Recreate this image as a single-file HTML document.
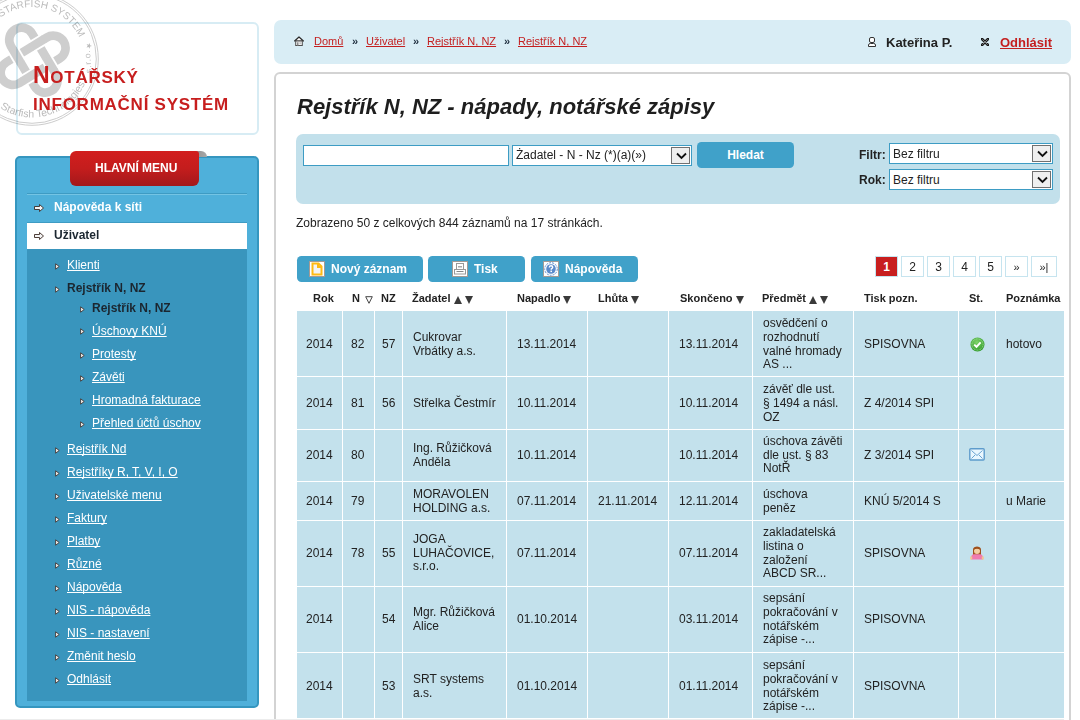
<!DOCTYPE html>
<html><head><meta charset="utf-8">
<style>
*{box-sizing:border-box}
html,body{margin:0;padding:0}
a,div,span{text-decoration-skip-ink:none}
body{width:1080px;height:720px;overflow:hidden;position:relative;background:#fff;font-family:"Liberation Sans",sans-serif;color:#222;font-size:12px}
.abs{position:absolute}
#logo{left:16px;top:22px;width:243px;height:113px;border:2px solid #d7ecf4;border-radius:6px}
.logot{color:#c71e1e;font-weight:bold;letter-spacing:0.72px;font-size:17px;line-height:20px;white-space:nowrap}
#menu{left:15px;top:156px;width:244px;height:552px;background:#4fb0da;border-radius:5px;border:2px solid #3596bf}
#tab{left:70px;top:151px;width:129px;height:35px;border-radius:6px 3px 6px 6px;background:linear-gradient(#d21e1e,#c41d1d 50%,#a3181b);color:#fff;font-weight:bold;font-size:12px;padding:10px 0 0 25px;line-height:14px}
#fold{left:193px;top:151px;width:14px;height:6px;background:linear-gradient(90deg,#8e8e8e,#a8a8a8);border-radius:0 7px 0 0}
#sep{left:27px;top:193px;width:220px;height:2px;background:linear-gradient(#3e9bc3 50%,#74c4e4 50%)}
#uziv{left:27px;top:222px;width:220px;height:27px;background:#fff;border-top:1px solid #3e9bc3}
#dark{left:27px;top:249px;width:220px;height:452px;background:#3995bd}
.mi{position:absolute;white-space:nowrap;font-size:12px;line-height:14px}
.mi a{color:#fff;text-decoration:underline}
.mi b{color:#1b2630}
.bul{position:absolute}
#bc{left:274px;top:20px;width:797px;height:44px;background:#d9edf5;border-radius:7px}
.bct{position:absolute;font-size:11px;line-height:13px;white-space:nowrap;color:#c41f1f;text-decoration:underline}
.rq{position:absolute;font-size:11px;line-height:13px;color:#1e2e3e;font-weight:bold}
#content{left:274px;top:72px;width:797px;height:700px;border:2px solid #d3d3d3;border-radius:6px}
#title{left:297px;top:94px;font-size:22px;font-weight:bold;font-style:italic;color:#1e1e1e;white-space:nowrap;line-height:26px}
#search{left:296px;top:134px;width:764px;height:70px;background:#c2e0eb;border-radius:7px}
.inp{position:absolute;background:#fff;border:1px solid #3d9cc4;font-size:12px;line-height:14px;white-space:nowrap}
.dd{position:absolute;width:19px;height:17px;background:#efefef;border:1px solid #707070}
.dd svg{position:absolute;left:4px;top:4px}
.btn{position:absolute;background:#40a1c9;border-radius:4.5px;color:#fff;font-weight:bold;font-size:12px;white-space:nowrap;line-height:14px}
.ico{position:absolute;width:16px;height:16px;background:#fff;border:1px solid #a39a94}
.ico svg{position:absolute;left:0;top:0}
.lbl{position:absolute;font-weight:bold;font-size:12px;line-height:14px;color:#222}
#info{left:296px;top:216px;white-space:nowrap;line-height:14px}
.pg{position:absolute;top:256px;height:21px;width:23px;border:1px solid #c6e4ef;text-align:center;line-height:19px;padding-top:1px;font-size:12px;color:#222}
table{position:absolute;left:296px;top:285px;border-collapse:separate;border-spacing:1px;table-layout:fixed;width:769px}
th{font-size:11px;font-weight:bold;text-align:left;height:24px;padding:0;white-space:nowrap;color:#222;vertical-align:middle;background:#fff}
td{background:#c3e1ec;padding:2px 0 0 10px;vertical-align:middle;line-height:13.8px;font-size:12px;color:#222;white-space:nowrap}
tr.up td{padding-top:0}
td.c0{padding-left:9px}td.c1{padding-left:8px}td.c2{padding-left:7px}
.arr{display:inline-block;vertical-align:-2px}
#bot{left:0;top:719px;width:1064px;height:1px;background:#ececec}
</style></head><body>

<div id="logo" class="abs"></div>
<!-- watermark -->
<svg class="abs" style="left:0;top:0;mix-blend-mode:multiply" width="110" height="135" viewBox="0 0 110 135">
 <defs>
  <path id="tp" d="M 0.71 17.47 A 52 52 0 0 1 83.21 49.97"/>
  <path id="bp" d="M 0.14 108.06 A 58.5 58.5 0 0 0 90.28 64.10"/>
 </defs>
 <g fill="none" stroke="#c6c6c6">
  <circle cx="32" cy="59" r="66.3" stroke-width="0.9"/>
  <circle cx="32" cy="59" r="64.3" stroke-width="0.9"/>
 </g>
 <g fill="#bcbcbc" font-family="Liberation Sans" font-size="9">
  <text font-size="10"><textPath href="#tp" textLength="93" lengthAdjust="spacing">STARFISH SYSTEM</textPath></text>
  <text font-size="10.5"><textPath href="#bp" textLength="100" lengthAdjust="spacing">Starfish Technologies</textPath></text>
  <text x="0" y="0" font-size="7.5" transform="translate(84.5,46.5) rotate(20)">★</text>
  <text x="0" y="0" font-size="8.5" letter-spacing="0.9" transform="translate(91.5,73) rotate(-94)">s.r.o.</text>
 </g>
 <g fill="none" stroke="#cecece" stroke-width="8.7">
  <rect x="-35.70" y="-12.30" width="71.40" height="24.60" rx="12.3" ry="12.3" transform="translate(33.4,60.1) rotate(59.5)"/>
  <rect x="-35.90" y="-12.30" width="71.80" height="24.60" rx="12.3" ry="12.3" transform="translate(33.1,60.3) rotate(-31.4)"/>
  <path d="M23.05 80.85 L35.25 73.40" stroke="#fff" stroke-width="12.299999999999999"/>
  <path d="M22.54 81.16 L35.77 73.08"/>
  <path d="M13.03 49.76 L20.29 62.08" stroke="#fff" stroke-width="12.299999999999999"/>
  <path d="M12.73 49.24 L20.60 62.60"/>
  <path d="M46.52 58.14 L53.78 70.46" stroke="#fff" stroke-width="12.299999999999999"/>
  <path d="M46.22 57.62 L54.08 70.98"/>
  <path d="M31.56 46.83 L43.77 39.38" stroke="#fff" stroke-width="12.299999999999999"/>
  <path d="M31.05 47.14 L44.28 39.07"/>
  </g>
</svg>

<div class="abs logot" style="left:33px;top:65px"><span style="font-size:23px">N</span>OTÁŘSKÝ</div>
<div class="abs logot" style="left:33px;top:95px;letter-spacing:0.75px">INFORMAČNÍ SYSTÉM</div>

<div id="menu" class="abs"></div>
<div id="sep" class="abs"></div>
<div id="uziv" class="abs"></div>
<div id="dark" class="abs"></div>
<div id="fold" class="abs"></div>
<div id="tab" class="abs">HLAVNÍ MENU</div>

<svg class="bul" style="left:34px;top:204px" width="10" height="8" viewBox="0 0 10 8"><path d="M0.5 2.5 H5.5 V0.5 L9.5 4 L5.5 7.5 V5.5 H0.5 Z" fill="#f4f4f4" stroke="#3b2a24" stroke-width="0.9"/></svg>
<div class="mi" style="left:54px;top:200px;font-weight:bold;color:#fff">Nápověda k síti</div>
<svg class="bul" style="left:34px;top:232px" width="10" height="8" viewBox="0 0 10 8"><path d="M0.5 2.5 H5.5 V0.5 L9.5 4 L5.5 7.5 V5.5 H0.5 Z" fill="#f4f4f4" stroke="#3b2a24" stroke-width="0.9"/></svg>
<div class="mi" style="left:54px;top:228px;font-weight:bold;color:#1b2630">Uživatel</div>
<svg class="bul" style="left:55px;top:263px" width="5" height="7" viewBox="0 0 5 7"><path d="M0.6 0.8 L4.2 3.5 L0.6 6.2 Z" fill="#f2efec" stroke="#3b2a24" stroke-width="0.8" stroke-linejoin="round"/></svg>
<div class="mi" style="left:67px;top:258px"><a>Klienti</a></div>
<svg class="bul" style="left:55px;top:286px" width="5" height="7" viewBox="0 0 5 7"><path d="M0.6 0.8 L4.2 3.5 L0.6 6.2 Z" fill="#f2efec" stroke="#3b2a24" stroke-width="0.8" stroke-linejoin="round"/></svg>
<div class="mi" style="left:67px;top:281px"><b>Rejstřík N, NZ</b></div>
<svg class="bul" style="left:80px;top:306px" width="5" height="7" viewBox="0 0 5 7"><path d="M0.6 0.8 L4.2 3.5 L0.6 6.2 Z" fill="#f2efec" stroke="#3b2a24" stroke-width="0.8" stroke-linejoin="round"/></svg>
<div class="mi" style="left:92px;top:301px"><b>Rejstřík N, NZ</b></div>
<svg class="bul" style="left:80px;top:328px" width="5" height="7" viewBox="0 0 5 7"><path d="M0.6 0.8 L4.2 3.5 L0.6 6.2 Z" fill="#f2efec" stroke="#3b2a24" stroke-width="0.8" stroke-linejoin="round"/></svg>
<div class="mi" style="left:92px;top:324px"><a>Úschovy KNÚ</a></div>
<svg class="bul" style="left:80px;top:352px" width="5" height="7" viewBox="0 0 5 7"><path d="M0.6 0.8 L4.2 3.5 L0.6 6.2 Z" fill="#f2efec" stroke="#3b2a24" stroke-width="0.8" stroke-linejoin="round"/></svg>
<div class="mi" style="left:92px;top:347px"><a>Protesty</a></div>
<svg class="bul" style="left:80px;top:375px" width="5" height="7" viewBox="0 0 5 7"><path d="M0.6 0.8 L4.2 3.5 L0.6 6.2 Z" fill="#f2efec" stroke="#3b2a24" stroke-width="0.8" stroke-linejoin="round"/></svg>
<div class="mi" style="left:92px;top:370px"><a>Závěti</a></div>
<svg class="bul" style="left:80px;top:398px" width="5" height="7" viewBox="0 0 5 7"><path d="M0.6 0.8 L4.2 3.5 L0.6 6.2 Z" fill="#f2efec" stroke="#3b2a24" stroke-width="0.8" stroke-linejoin="round"/></svg>
<div class="mi" style="left:92px;top:393px"><a>Hromadná fakturace</a></div>
<svg class="bul" style="left:80px;top:421px" width="5" height="7" viewBox="0 0 5 7"><path d="M0.6 0.8 L4.2 3.5 L0.6 6.2 Z" fill="#f2efec" stroke="#3b2a24" stroke-width="0.8" stroke-linejoin="round"/></svg>
<div class="mi" style="left:92px;top:416px"><a>Přehled účtů úschov</a></div>
<svg class="bul" style="left:55px;top:447px" width="5" height="7" viewBox="0 0 5 7"><path d="M0.6 0.8 L4.2 3.5 L0.6 6.2 Z" fill="#f2efec" stroke="#3b2a24" stroke-width="0.8" stroke-linejoin="round"/></svg>
<div class="mi" style="left:67px;top:442px"><a>Rejstřík Nd</a></div>
<svg class="bul" style="left:55px;top:470px" width="5" height="7" viewBox="0 0 5 7"><path d="M0.6 0.8 L4.2 3.5 L0.6 6.2 Z" fill="#f2efec" stroke="#3b2a24" stroke-width="0.8" stroke-linejoin="round"/></svg>
<div class="mi" style="left:67px;top:465px"><a>Rejstříky R, T, V, I, O</a></div>
<svg class="bul" style="left:55px;top:493px" width="5" height="7" viewBox="0 0 5 7"><path d="M0.6 0.8 L4.2 3.5 L0.6 6.2 Z" fill="#f2efec" stroke="#3b2a24" stroke-width="0.8" stroke-linejoin="round"/></svg>
<div class="mi" style="left:67px;top:488px"><a>Uživatelské menu</a></div>
<svg class="bul" style="left:55px;top:516px" width="5" height="7" viewBox="0 0 5 7"><path d="M0.6 0.8 L4.2 3.5 L0.6 6.2 Z" fill="#f2efec" stroke="#3b2a24" stroke-width="0.8" stroke-linejoin="round"/></svg>
<div class="mi" style="left:67px;top:511px"><a>Faktury</a></div>
<svg class="bul" style="left:55px;top:539px" width="5" height="7" viewBox="0 0 5 7"><path d="M0.6 0.8 L4.2 3.5 L0.6 6.2 Z" fill="#f2efec" stroke="#3b2a24" stroke-width="0.8" stroke-linejoin="round"/></svg>
<div class="mi" style="left:67px;top:534px"><a>Platby</a></div>
<svg class="bul" style="left:55px;top:562px" width="5" height="7" viewBox="0 0 5 7"><path d="M0.6 0.8 L4.2 3.5 L0.6 6.2 Z" fill="#f2efec" stroke="#3b2a24" stroke-width="0.8" stroke-linejoin="round"/></svg>
<div class="mi" style="left:67px;top:557px"><a>Různé</a></div>
<svg class="bul" style="left:55px;top:585px" width="5" height="7" viewBox="0 0 5 7"><path d="M0.6 0.8 L4.2 3.5 L0.6 6.2 Z" fill="#f2efec" stroke="#3b2a24" stroke-width="0.8" stroke-linejoin="round"/></svg>
<div class="mi" style="left:67px;top:580px"><a>Nápověda</a></div>
<svg class="bul" style="left:55px;top:608px" width="5" height="7" viewBox="0 0 5 7"><path d="M0.6 0.8 L4.2 3.5 L0.6 6.2 Z" fill="#f2efec" stroke="#3b2a24" stroke-width="0.8" stroke-linejoin="round"/></svg>
<div class="mi" style="left:67px;top:603px"><a>NIS - nápověda</a></div>
<svg class="bul" style="left:55px;top:631px" width="5" height="7" viewBox="0 0 5 7"><path d="M0.6 0.8 L4.2 3.5 L0.6 6.2 Z" fill="#f2efec" stroke="#3b2a24" stroke-width="0.8" stroke-linejoin="round"/></svg>
<div class="mi" style="left:67px;top:626px"><a>NIS - nastavení</a></div>
<svg class="bul" style="left:55px;top:654px" width="5" height="7" viewBox="0 0 5 7"><path d="M0.6 0.8 L4.2 3.5 L0.6 6.2 Z" fill="#f2efec" stroke="#3b2a24" stroke-width="0.8" stroke-linejoin="round"/></svg>
<div class="mi" style="left:67px;top:649px"><a>Změnit heslo</a></div>
<svg class="bul" style="left:55px;top:677px" width="5" height="7" viewBox="0 0 5 7"><path d="M0.6 0.8 L4.2 3.5 L0.6 6.2 Z" fill="#f2efec" stroke="#3b2a24" stroke-width="0.8" stroke-linejoin="round"/></svg>
<div class="mi" style="left:67px;top:672px"><a>Odhlásit</a></div>

<div id="bc" class="abs"></div>
<svg class="abs" style="left:294px;top:36px" width="10" height="10" viewBox="0 0 10 10"><path d="M0.6 5 L5 1 L9.4 5 Z" fill="#fff" stroke="#2a2a2a" stroke-width="1.2" stroke-linejoin="round"/><rect x="1.7" y="5" width="6.6" height="4.5" fill="#f4f4f4" stroke="#505050" stroke-width="1"/><rect x="3" y="6.3" width="1.5" height="3.2" fill="#8a8a8a"/><rect x="5.4" y="6.3" width="1.8" height="1.8" fill="#c4c4c4"/></svg>
<div class="bct" style="left:314px;top:35px">Domů</div>
<div class="rq" style="left:352px;top:35px">»</div>
<div class="bct" style="left:366px;top:35px">Uživatel</div>
<div class="rq" style="left:413px;top:35px">»</div>
<div class="bct" style="left:427px;top:35px">Rejstřík N, NZ</div>
<div class="rq" style="left:504px;top:35px">»</div>
<div class="bct" style="left:518px;top:35px">Rejstřík N, NZ</div>

<svg class="abs" style="left:868px;top:37px" width="8" height="10" viewBox="0 0 8 10"><rect x="1.5" y="0.5" width="5" height="5" rx="1.5" fill="#fff" stroke="#333" stroke-width="1"/><path d="M0.5 9.5 V8 Q0.5 6.5 2.5 6.5 H5.5 Q7.5 6.5 7.5 8 V9.5 Z" fill="#fff" stroke="#333" stroke-width="1"/></svg>
<div class="lbl" style="left:886px;top:35px;font-size:13px;line-height:15px;color:#222">Kateřina P.</div>
<svg class="abs" style="left:981px;top:38px" width="8" height="8" viewBox="0 0 8 8"><path d="M1 1 L7 7 M7 1 L1 7" stroke="#1a1a1a" stroke-width="2.6" stroke-linecap="round"/><path d="M1.3 1.3 L6.7 6.7 M6.7 1.3 L1.3 6.7" stroke="#9a9a9a" stroke-width="0.8"/></svg>
<div class="lbl" style="left:1000px;top:35px;font-size:13px;line-height:15px;color:#c41f1f;text-decoration:underline">Odhlásit</div>

<div id="content" class="abs"></div>
<div id="title" class="abs">Rejstřík N, NZ - nápady, notářské zápisy</div>
<div id="search" class="abs"></div>
<div class="inp" style="left:303px;top:145px;width:206px;height:21px"></div>
<div class="inp" style="left:512px;top:145px;width:180px;height:21px;padding:2px 0 0 3px">Żadatel - N - Nz (*)(a)(»)</div>
<div class="dd" style="left:671px;top:147px"><svg width="11" height="8" viewBox="0 0 11 8"><path d="M1 1.5 L5.5 6 L10 1.5" fill="none" stroke="#111" stroke-width="1.8"/></svg></div>
<div class="btn" style="left:697px;top:142px;width:97px;height:26px;text-align:center;padding-top:6px">Hledat</div>
<div class="lbl" style="left:859px;top:148px">Filtr:</div>
<div class="inp" style="left:889px;top:143px;width:164px;height:21px;padding:3px 0 0 3px">Bez filtru</div>
<div class="dd" style="left:1032px;top:145px"><svg width="11" height="8" viewBox="0 0 11 8"><path d="M1 1.5 L5.5 6 L10 1.5" fill="none" stroke="#111" stroke-width="1.8"/></svg></div>
<div class="lbl" style="left:859px;top:173px">Rok:</div>
<div class="inp" style="left:889px;top:169px;width:164px;height:21px;padding:3px 0 0 3px">Bez filtru</div>
<div class="dd" style="left:1032px;top:171px"><svg width="11" height="8" viewBox="0 0 11 8"><path d="M1 1.5 L5.5 6 L10 1.5" fill="none" stroke="#111" stroke-width="1.8"/></svg></div>

<div id="info" class="abs">Zobrazeno 50 z celkových 844 záznamů na 17 stránkách.</div>

<div class="btn" style="left:297px;top:256px;width:126px;height:26px"><span style="position:absolute;left:34px;top:6px">Nový záznam</span></div>
<div class="ico" style="left:309px;top:261px"><svg width="14" height="14" viewBox="0 0 14 14"><path d="M2.5 1.5 H8.5 L11.5 4.5 V12.5 H2.5 Z" fill="#f4f4f4" stroke="#ffba12" stroke-width="2"/><path d="M8 1.5 V5 H11.5" fill="none" stroke="#ffba12" stroke-width="2"/></svg></div>
<div class="btn" style="left:428px;top:256px;width:97px;height:26px"><span style="position:absolute;left:46px;top:6px">Tisk</span></div>
<div class="ico" style="left:452px;top:261px"><svg width="14" height="14" viewBox="0 0 14 14"><rect x="3.5" y="1.5" width="7" height="6" fill="#fff" stroke="#999" stroke-width="1"/><rect x="5" y="4" width="4" height="1.5" fill="#aaa"/><rect x="1.5" y="7.5" width="11" height="4.5" fill="#fff" stroke="#999" stroke-width="1"/><rect x="3.5" y="9" width="7" height="1" fill="#888"/></svg></div>
<div class="btn" style="left:531px;top:256px;width:107px;height:26px"><span style="position:absolute;left:34px;top:6px">Nápověda</span></div>
<div class="ico" style="left:543px;top:261px"><svg width="14" height="14" viewBox="0 0 14 14"><circle cx="7" cy="7" r="6.3" fill="none" stroke="#5d8fd0" stroke-width="1" stroke-dasharray="2 1"/><circle cx="7" cy="7" r="4.8" fill="#5a8acb"/><path d="M5.3 5.6 Q5.3 3.8 7 3.8 Q8.7 3.8 8.7 5.3 Q8.7 6.3 7.3 6.9 V7.8" fill="none" stroke="#fff" stroke-width="1.4"/><rect x="6.4" y="8.6" width="1.6" height="1.5" fill="#fff"/></svg></div>

<div class="pg" style="left:875px;background:#c81f1f;color:#fff;font-weight:bold">1</div>
<div class="pg" style="left:901px">2</div>
<div class="pg" style="left:927px">3</div>
<div class="pg" style="left:953px">4</div>
<div class="pg" style="left:979px">5</div>
<div class="pg" style="left:1005px;font-size:11px">»</div>
<div class="pg" style="left:1031px;width:26px;font-size:11px">»|</div>

<table>
<colgroup><col style="width:45px"><col style="width:31px"><col style="width:27px"><col style="width:103px"><col style="width:80px"><col style="width:80px"><col style="width:83px"><col style="width:100px"><col style="width:104px"><col style="width:36px"><col style="width:68px"></colgroup>
<tr>
<th style="padding-left:16px">Rok</th>
<th style="padding-left:9px">N <svg class="arr" style="margin-left:2px" width="8" height="8" viewBox="0 0 8 8"><path d="M0.7 0.7 H7.3 L4 7.3 Z" fill="none" stroke="#444" stroke-width="1"/></svg></th>
<th style="padding-left:6px">NZ</th>
<th style="padding-left:9px">Žadatel <svg class="arr" width="8" height="8" viewBox="0 0 8 8"><path d="M0 8 L4 0 L8 8Z" fill="#3a3a3a"/></svg> <svg class="arr" width="8" height="8" viewBox="0 0 8 8"><path d="M0 0 L8 0 L4 8Z" fill="#3a3a3a"/></svg></th>
<th style="padding-left:10px">Napadlo <svg class="arr" width="8" height="8" viewBox="0 0 8 8"><path d="M0 0 L8 0 L4 8Z" fill="#3a3a3a"/></svg></th>
<th style="padding-left:10px">Lhůta <svg class="arr" width="8" height="8" viewBox="0 0 8 8"><path d="M0 0 L8 0 L4 8Z" fill="#3a3a3a"/></svg></th>
<th style="padding-left:11px">Skončeno <svg class="arr" width="8" height="8" viewBox="0 0 8 8"><path d="M0 0 L8 0 L4 8Z" fill="#3a3a3a"/></svg></th>
<th style="padding-left:9px">Předmět <svg class="arr" width="8" height="8" viewBox="0 0 8 8"><path d="M0 8 L4 0 L8 8Z" fill="#3a3a3a"/></svg> <svg class="arr" width="8" height="8" viewBox="0 0 8 8"><path d="M0 0 L8 0 L4 8Z" fill="#3a3a3a"/></svg></th>
<th style="padding-left:10px">Tisk pozn.</th>
<th style="padding-left:10px">St.</th>
<th style="padding-left:10px">Poznámka</th>
</tr>
<tr style="height:65px"><td class="c0">2014</td><td class="c1">82</td><td class="c2">57</td><td class="c3">Cukrovar<br>Vrbátky a.s.</td><td class="c4">13.11.2014</td><td class="c5"></td><td class="c6">13.11.2014</td><td class="c7">osvědčení o<br>rozhodnutí<br>valné hromady<br>AS ...</td><td class="c8">SPISOVNA</td><td class="c9"><svg width="15" height="15" viewBox="0 0 15 15" style="display:block;position:relative;left:1px"><defs><radialGradient id="gc" cx="45%" cy="35%" r="65%"><stop offset="0" stop-color="#7fd46a"/><stop offset="1" stop-color="#2f9a2a"/></radialGradient></defs><circle cx="7.5" cy="7.5" r="7" fill="url(#gc)"/><circle cx="7.5" cy="7.5" r="5.6" fill="none" stroke="#b9e8ad" stroke-width="0.7" stroke-dasharray="1 0.6"/><path d="M4.2 7.6 L6.5 9.8 L10.6 5.4" fill="none" stroke="#fff" stroke-width="1.9"/></svg></td><td class="c10">hotovo</td></tr>
<tr style="height:52px"><td class="c0">2014</td><td class="c1">81</td><td class="c2">56</td><td class="c3">Střelka Čestmír</td><td class="c4">10.11.2014</td><td class="c5"></td><td class="c6">10.11.2014</td><td class="c7">závěť dle ust.<br>§ 1494 a násl.<br>OZ</td><td class="c8">Z 4/2014 SPI</td><td class="c9"></td><td class="c10"></td></tr>
<tr class="up" style="height:51px"><td class="c0">2014</td><td class="c1">80</td><td class="c2"></td><td class="c3">Ing. Růžičková<br>Anděla</td><td class="c4">10.11.2014</td><td class="c5"></td><td class="c6">10.11.2014</td><td class="c7">úschova závěti<br>dle ust. § 83<br>NotŘ</td><td class="c8">Z 3/2014 SPI</td><td class="c9"><svg width="16" height="13" viewBox="0 0 16 13" style="display:block;position:relative;top:-1px"><rect x="0.8" y="0.8" width="14.4" height="11.2" rx="1" fill="#eaf7ff" stroke="#5e9ccc" stroke-width="1.4"/><path d="M2.5 2.5 L8 7.5 L13.5 2.5 M2.5 10.5 L6 7 M13.5 10.5 L10 7" fill="none" stroke="#6aa4d2" stroke-width="1"/></svg></td><td class="c10"></td></tr>
<tr style="height:38px"><td class="c0">2014</td><td class="c1">79</td><td class="c2"></td><td class="c3">MORAVOLEN<br>HOLDING a.s.</td><td class="c4">07.11.2014</td><td class="c5">21.11.2014</td><td class="c6">12.11.2014</td><td class="c7">úschova<br>peněz</td><td class="c8">KNÚ 5/2014 S</td><td class="c9"></td><td class="c10">u Marie</td></tr>
<tr class="up" style="height:65px"><td class="c0">2014</td><td class="c1">78</td><td class="c2">55</td><td class="c3">JOGA<br>LUHAČOVICE,<br>s.r.o.</td><td class="c4">07.11.2014</td><td class="c5"></td><td class="c6">07.11.2014</td><td class="c7">zakladatelská<br>listina o<br>založení<br>ABCD SR...</td><td class="c8">SPISOVNA</td><td class="c9"><svg width="14" height="14" viewBox="0 0 14 14" style="display:block;position:relative;top:-1px;left:1px"><path d="M3 9 L3 4 Q3 0.5 7 0.5 Q11 0.5 11 4 L11 9 Z" fill="#a0501c"/><ellipse cx="7" cy="5" rx="3" ry="3" fill="#f4cfa2"/><path d="M3.6 3.8 Q7 1.8 10.4 3.8 L10.4 2.8 Q7 0.6 3.6 2.8Z" fill="#9a4b18"/><path d="M1 12 Q1 8.5 4 8.3 L10 8.3 Q13 8.5 13 12 L13 13.5 L1 13.5 Z" fill="#f07cb0"/><rect x="0.2" y="10.5" width="2" height="3" fill="#f2c493"/><rect x="11.8" y="10.5" width="2" height="3" fill="#f2c493"/></svg></td><td class="c10"></td></tr>
<tr class="up" style="height:65px"><td class="c0">2014</td><td class="c1"></td><td class="c2">54</td><td class="c3">Mgr. Růžičková<br>Alice</td><td class="c4">01.10.2014</td><td class="c5"></td><td class="c6">03.11.2014</td><td class="c7">sepsání<br>pokračování v<br>notářském<br>zápise -...</td><td class="c8">SPISOVNA</td><td class="c9"></td><td class="c10"></td></tr>
<tr style="height:65px"><td class="c0">2014</td><td class="c1"></td><td class="c2">53</td><td class="c3">SRT systems<br>a.s.</td><td class="c4">01.10.2014</td><td class="c5"></td><td class="c6">01.11.2014</td><td class="c7">sepsání<br>pokračování v<br>notářském<br>zápise -...</td><td class="c8">SPISOVNA</td><td class="c9"></td><td class="c10"></td></tr>
</table>
<div id="bot" class="abs"></div>

</body></html>
